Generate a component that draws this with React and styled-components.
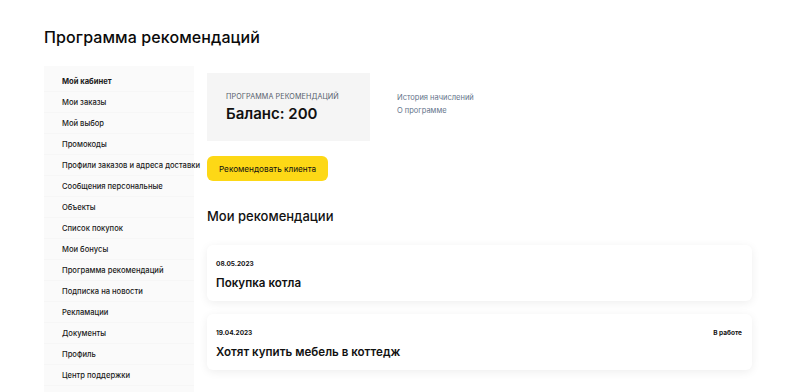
import React from 'react';
import styled, { createGlobalStyle } from 'styled-components';

const GlobalStyle = createGlobalStyle`
body {
  margin: 0;
  background: #fff;
  font-family: Inter, "Noto Sans", "Liberation Sans", sans-serif;
  color: #111;
}
`;

const Page = styled.div`
padding: 26px 44px 0;
width: 800px;
height: 392px;
box-sizing: border-box;
overflow: hidden;
`;
const Title = styled.h1`
margin: 0 0 17px;
font-size: 16px;
line-height: 23px;
font-weight: 500;
letter-spacing: 0.1px;
color: #0a0a0a;
`;
const Layout = styled.div`
display: grid;
grid-template-columns: 150px 545px;
column-gap: 13px;
align-items: start;
`;
const Sidebar = styled.nav`
background: #fafafa;
padding-top: 5px;
height: 340px;
`;
const NavItem = styled.div`
height: 21px;
line-height: 21px;
padding-left: 18px;
font-size: 7.6px;
font-weight: ${props => props.active ? 700 : 450};
color: #1a1a1a;
white-space: nowrap;
border-bottom: 1px solid #f6f6f6;
box-sizing: border-box;
`;
const Main = styled.div`
padding-top: 7px;
`;
const TopRow = styled.div`
display: flex;
gap: 27px;
`;
const BalanceCard = styled.div`
width: 163px;
height: 68px;
background: #f5f5f5;
padding: 19px 0 0 19px;
box-sizing: border-box;
`;
const BalanceLabel = styled.div`
font-size: 7.2px;
color: #56606c;
text-transform: uppercase;
letter-spacing: 0.1px;
`;
const BalanceValue = styled.div`
font-size: 15px;
font-weight: 600;
margin-top: 3px;
`;
const Links = styled.div`
display: flex;
flex-direction: column;
gap: 4px;
padding-top: 20px;
`;
const Link = styled.a`
font-size: 7.5px;
color: #64748a;
text-decoration: none;
`;
const Button = styled.button`
margin-top: 15px;
width: 121px;
height: 25px;
border: none;
border-radius: 6px;
background: #fdd816;
font-family: inherit;
font-size: 8.2px;
color: #111;
padding: 0;
`;
const SectionTitle = styled.h2`
margin: 26px 0 20px;
font-size: 13px;
line-height: 18px;
font-weight: 500;
`;
const Cards = styled.div`
display: flex;
flex-direction: column;
gap: 13px;
`;
const Card = styled.div`
height: 56px;
box-sizing: border-box;
background: #fff;
border-radius: 6px;
box-shadow: 0 2px 10px rgba(0, 0, 0, 0.07);
padding: 15px 10px 0 9px;
`;
const CardHead = styled.div`
display: flex;
justify-content: space-between;
font-size: 6.5px;
font-weight: 700;
line-height: 9px;
`;
const CardTitle = styled.div`
margin-top: 7px;
font-size: 11.6px;
font-weight: 600;
`;

const menu = [
  'Мой кабинет', 'Мои заказы', 'Мой выбор', 'Промокоды',
  'Профили заказов и адреса доставки', 'Сообщения персональные', 'Объекты',
  'Список покупок', 'Мои бонусы', 'Программа рекомендаций', 'Подписка на новости',
  'Рекламации', 'Документы', 'Профиль', 'Центр поддержки'
];

const recs = [
  { date: '08.05.2023', title: 'Покупка котла', status: '' },
  { date: '19.04.2023', title: 'Хотят купить мебель в коттедж', status: 'В работе' },
];

const App = () => {
  return (
    <Page>
      <GlobalStyle />
      <Title>Программа рекомендаций</Title>
      <Layout>
        <Sidebar>
          {menu.map((m, i) => (
            <NavItem key={m} active={i === 0}>{m}</NavItem>
          ))}
        </Sidebar>
        <Main>
          <TopRow>
            <BalanceCard>
              <BalanceLabel>Программа рекомендаций</BalanceLabel>
              <BalanceValue>Баланс: 200</BalanceValue>
            </BalanceCard>
            <Links>
              <Link href="#">История начислений</Link>
              <Link href="#">О программе</Link>
            </Links>
          </TopRow>
          <Button>Рекомендовать клиента</Button>
          <SectionTitle>Мои рекомендации</SectionTitle>
          <Cards>
            {recs.map(r => (
              <Card key={r.date}>
                <CardHead>
                  <span>{r.date}</span>
                  <span>{r.status}</span>
                </CardHead>
                <CardTitle>{r.title}</CardTitle>
              </Card>
            ))}
          </Cards>
        </Main>
      </Layout>
    </Page>
  );
};

export default App;
